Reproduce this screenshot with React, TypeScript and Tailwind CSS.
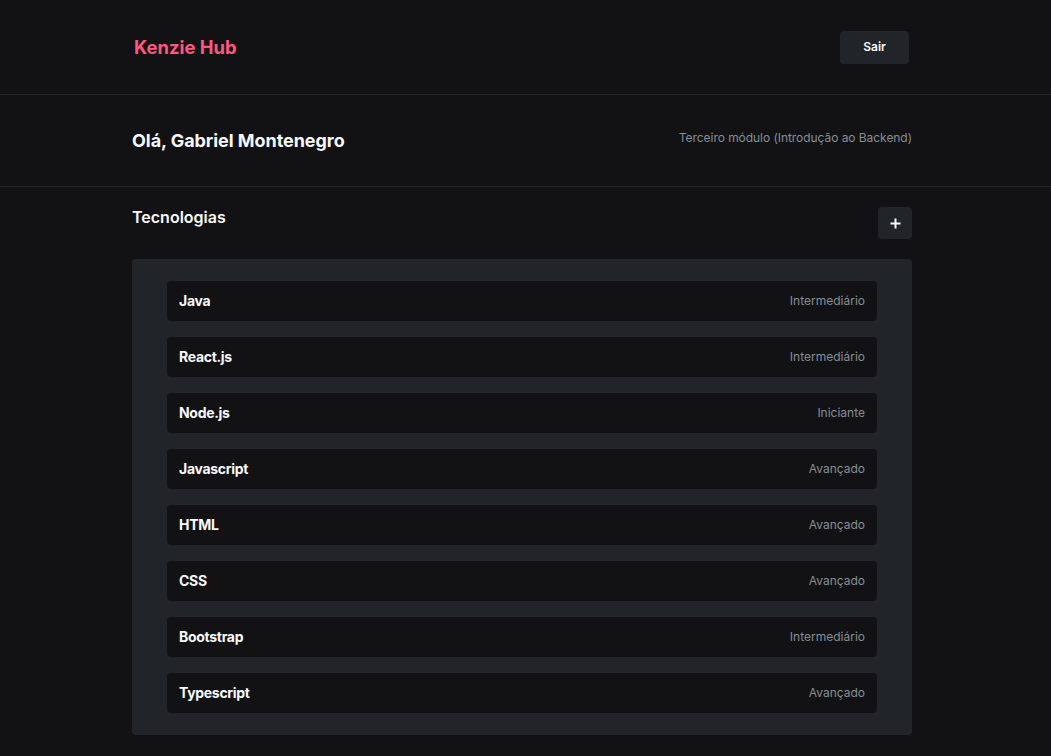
import React from "react";

const techs = [
  ["Java", "Intermediário"],
  ["React.js", "Intermediário"],
  ["Node.js", "Iniciante"],
  ["Javascript", "Avançado"],
  ["HTML", "Avançado"],
  ["CSS", "Avançado"],
  ["Bootstrap", "Intermediário"],
  ["Typescript", "Avançado"],
];

export default function App() {
  return (
    <div className="min-h-screen bg-[#121214] text-[#f8f9fa]" style={{ fontFamily: "Inter, 'Noto Sans', sans-serif" }}>
      <header className="h-[95px] border-b border-[#212529]">
        <div className="ml-[134px] w-[775px] h-[94px] flex items-center justify-between">
          <h1 className="text-[18.4px] font-bold text-[#ff577f] leading-none">Kenzie Hub</h1>
          <button className="h-[33px] w-[69px] rounded-[4px] bg-[#212529] text-[12px] font-semibold text-[#f8f9fa]">Sair</button>
        </div>
      </header>
      <section className="h-[92px] border-b border-[#212529]">
        <div className="ml-[132px] w-[780px] h-[91px] flex items-center justify-between">
          <h2 className="text-[18px] font-bold leading-none tracking-[-0.05px]">Olá, Gabriel Montenegro</h2>
          <p className="text-[12px] text-[#868e96] -mt-[6px] tracking-[-0.05px]">Terceiro módulo (Introdução ao Backend)</p>
        </div>
      </section>
      <main className="ml-[132px] w-[780px] pt-[20px]">
        <div className="flex justify-between items-start">
          <h3 className="text-[16px] font-semibold leading-[24px] -mt-[2px]">Tecnologias</h3>
          <button className="w-[34px] h-[32px] rounded-[4px] bg-[#212529] flex items-center justify-center">
            <svg width="11" height="11" viewBox="0 0 11 11"><path d="M5.5 0.5v10M0.5 5.5h10" stroke="#f8f9fa" strokeWidth="2" /></svg>
          </button>
        </div>
        <ul className="mt-[20px] bg-[#212529] rounded-[4px] px-[35px] py-[22px] flex flex-col gap-[16px]">
          {techs.map(([n, l]) => (
            <li key={n} className="h-[40px] bg-[#121214] rounded-[4px] pl-[12px] pr-[12px] flex items-center justify-between">
              <span className="text-[14px] font-bold tracking-[-0.3px] -mt-[2px]">{n}</span>
              <span className="text-[12px] text-[#868e96]">{l}</span>
            </li>
          ))}
        </ul>
      </main>
    </div>
  );
}
